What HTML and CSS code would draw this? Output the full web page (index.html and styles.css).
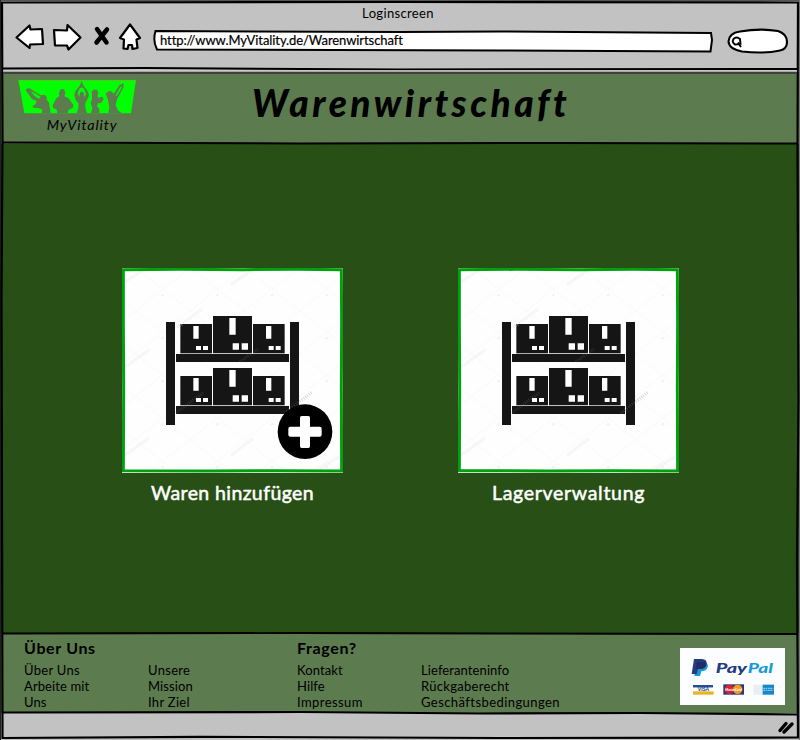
FILE: index.html
```html
<!DOCTYPE html>
<html lang="de">
<head>
<meta charset="utf-8">
<title>Loginscreen</title>
<link rel="stylesheet" href="styles.css">
</head>
<body>
<div class="window">
  <header class="chrome">
    <div class="window-title"><span class="t-title">Loginscreen</span></div>
    <div class="toolbar">
      <svg class="nav" width="138" height="34" viewBox="12 20 138 34">
        <g fill="#fff" stroke="#000" stroke-width="2.2" stroke-linejoin="round">
          <path d="M16.5 37.500L29.500 25.500L30.500 29.500L42 29L43 44L30 44.500L29.500 48Z"/>
          <path d="M54 30L67 30.500L67.500 25L80.500 37.500L68.500 49.500L67 45.500L55 45.500L54.500 38Z"/>
          <path d="M130 24.500L140 38L136.500 39.500L137.500 48L132.500 49L132 45L128.500 45L127.500 49L123.500 48.500L124 39.500L120 38Z"/>
        </g>
        <g stroke="#000" stroke-width="4.500" stroke-linecap="round"><path d="M97 29L106.500 42.500M107 29.500L96.500 42.500"/></g>
      </svg>
      <div class="address">
        <svg class="address-shape" width="560" height="24" viewBox="153 29 560 24"><path d="M155.500 31L400 32L500 31.500L711 33L712 40L710.500 51.500L500 50.500L157 49.500Q152.500 41 155.500 31Z" fill="#fff" stroke="#000" stroke-width="2"/></svg>
        <span class="t-url">http://www.MyVitality.de/Warenwirtschaft</span>
      </div>
      <svg class="search" width="62" height="28" viewBox="726 27 62 28">
        <path d="M740 31.500Q760 28 778 31Q787 34 787 42Q787 49 780 50.500Q764 54 742 51.500Q729 49 728.500 41.500Q729 33 740 31.500Z" fill="#fff" stroke="#000" stroke-width="2.100"/>
        <path d="M733.500 39Q736.500 36 740 39L740.500 44L735 44.500Q731.500 42 733.500 39ZM738 42.500L741 47" fill="none" stroke="#000" stroke-width="1.900"/>
      </svg>
    </div>
  </header>

  <section class="banner">
    <svg class="logo" width="125" height="65" viewBox="0 0 375 195">
      <path d="M10 18H363L348 118H28Z" fill="#0f0"/>
      <path d="M12 19H363" stroke="#8ba52f" stroke-width="2"/>
      <g fill="#5c7b4e">
        <path d="M33 45L43 43L77 64L88 62L96 70L94 76L102 86L107 118H80L82 107L70 102L54 101L53 95L61 92L65 81L51 75L34 52Z"/>
        <path d="M133 67L132 56L137 46H147L151 56L148 67L161 73L175 93L174 101L160 108L158 118H126V108L114 101L113 94L124 73Z"/>
        <path d="M200 20L205 34L219 53L222 65L216 78L211 87V101L216 118H185L190 101V88L182 78L178 64L181 52L195 34Z"/>
        <path d="M231 63L230 54L236 47H246L250 56L247 67L255 75L253 70L262 68L266 75L258 87L249 88L246 96L253 105V118H228L232 103L227 88L231 76Z"/>
        <path d="M272 58L283 51L291 53L296 60L313 34L325 27L326 39L306 76L302 94L310 110L321 118H280L283 99L279 78Z"/>
      </g>
      <path d="M188 58L194 43Q201 37 207 44L213 60L208 70L206 57Q200 48 195 57L193 69ZM47 51L65 61L77 68L72 74L59 67ZM301 66L314 42L321 34L319 43L307 64Z" fill="#0f0"/>
      <text class="logo-text" x="95" y="168" textLength="210" lengthAdjust="spacing">MyVitality</text>
    </svg>
    <h1><span class="t-h1">Warenwirtschaft</span></h1>
  </section>

  <main>
    <a class="card">
      <svg class="picture" width="221" height="205" viewBox="36 39 663 615">
        <defs>
          <pattern id="grid" x="76" y="38" width="164" height="129" patternUnits="userSpaceOnUse"><path d="M0 0L164 129M0 129L164 0" stroke="#f1f1f1" stroke-width="2" stroke-dasharray="9 4"/><path d="M78 80h8v5h-8z" fill="#ececec"/></pattern>
          <g id="box"><path d="M0 0H95V88H0Z" fill="#151515"/><path d="M39 6H55V44H39ZM47 66H62V78H47ZM68 66H83V78H68Z" fill="#fff"/></g>
          <g id="bigbox"><path d="M0 0H117V112H0Z" fill="#151515"/><path d="M49 6H68V56H49ZM59 82H78V101H59ZM86 82H105V101H86Z" fill="#fff"/></g>
          <g id="shelf">
            <path d="M36 39H699V654H36Z" fill="#fefefe"/>
            <path d="M36 39H699V654H36Z" fill="url(#grid)"/>
            <path d="M168 201H195V510H168ZM540 201H567V510H540ZM198 297H537V321H198ZM198 453H537V477H198Z" fill="#151515"/>
            <use href="#box" x="211" y="207"/><use href="#bigbox" x="309" y="183"/><use href="#box" x="429" y="207"/>
            <use href="#box" x="211" y="363"/><use href="#bigbox" x="309" y="339"/><use href="#box" x="429" y="363"/>
            <path d="M198 474L282 411M390 320L443 282M525 474L606 411" stroke="#777" stroke-width="9" stroke-dasharray="3 4" opacity=".3"/>
            <path d="M48 78L104 42M364 88L430 42M48 334L118 284M202 217L276 162M364 600L430 550M46 600L116 550M630 640L690 603" stroke="#ddd" stroke-width="9" stroke-dasharray="3 4" opacity=".5"/>
            <path d="M40 44L210 43L400 44L560 43L694 44L695 200L694 400L695 648L500 647L300 648L40 647L41 400L40 200Z" fill="none" stroke="#00a010" stroke-width="9"/>
          </g>
        </defs>
        <use href="#shelf"/>
        <circle cx="585" cy="530" r="82" fill="#000"/>
        <path d="M575 483H595Q600 483 600 488V515H629Q635 515 635 521V539Q635 545 629 545H600V573Q600 579 595 579H575Q570 579 570 573V545H541Q535 545 535 539V521Q535 515 541 515H570V488Q570 483 575 483Z" fill="#fff"/>
      </svg>
      <span class="label"><span class="t-add">Waren hinzufügen</span></span>
    </a>
    <a class="card">
      <svg class="picture" width="221" height="205" viewBox="36 39 663 615"><use href="#shelf"/></svg>
      <span class="label"><span class="t-stock">Lagerverwaltung</span></span>
    </a>
  </main>

  <footer>
    <section class="group">
      <h2>Über Uns</h2>
      <div class="links">
        <ul><li class="wide">Über Uns</li><li>Arbeite mit</li><li>Uns</li></ul>
        <ul><li class="wide">Unsere</li><li>Mission</li><li class="wide">Ihr Ziel</li></ul>
      </div>
    </section>
    <section class="group">
      <h2>Fragen?</h2>
      <div class="links">
        <ul><li>Kontakt</li><li>Hilfe</li><li class="wider">Impressum</li></ul>
        <ul><li>Lieferanteninfo</li><li class="wide">Rückgaberecht</li><li class="wider">Geschäftsbedingungen</li></ul>
      </div>
    </section>
    <svg class="paypal" width="105" height="57" viewBox="240 69 315 171">
      <path d="M240 69H555V240H240Z" fill="#fcfdff"/>
      <path d="M290 111H315Q326 116 323 127Q319 139 304 139L300 153H283Z" fill="#169bd7"/>
      <path d="M282 102H306Q321 103 320 116Q317 132 300 132H294L290 147H275Z" fill="#253b80"/>
      <path d="M290 111H314Q321 113 319 119Q315 132 299 132H287Z" fill="#222d65"/>
      <text class="pp pp-a" x="347" y="144" textLength="94" lengthAdjust="spacingAndGlyphs">Pay</text>
      <text class="pp pp-b" x="443" y="144" textLength="76" lengthAdjust="spacingAndGlyphs">Pal</text>
      <path d="M279 180H339V188H279Z" fill="#294b92"/><path d="M279 188H339V199H279Z" fill="#fff"/><path d="M279 199H341V209H279Z" fill="#e8b51e"/>
      <text class="visa" x="293" y="199" textLength="34" lengthAdjust="spacingAndGlyphs">VISA</text>
      <path d="M370 178H432V209H370Z" fill="#28377c"/><circle cx="388" cy="193" r="14" fill="#d7232e"/><circle cx="413" cy="193" r="14" fill="#f49b20"/>
      <text class="mc" x="376" y="198" textLength="49" lengthAdjust="spacingAndGlyphs">MasterCard</text>
      <path d="M460 179H522V209H460Z" fill="#e9eef0"/><path d="M488 179H522V209H488Z" fill="#1687c9"/><path d="M490 190H520M490 196H520" stroke="#a9daf2" stroke-width="3" stroke-dasharray="5 2"/>
    </svg>
  </footer>

  <div class="status">
    <svg width="18" height="16" viewBox="777 719 18 16"><path d="M780 730.500L786 723.500M784 732L792 724" stroke="#000" stroke-width="3.400" stroke-linecap="round"/></svg>
  </div>

  <svg class="outline" width="800" height="740" viewBox="0 0 800 740" fill="none" stroke="#000">
    <path d="M0 .5H800" stroke="#555"/>
    <path d="M.5 0V740" stroke="#222"/>
    <path d="M799.500 0V740" stroke="#777"/>
    <path d="M2 2.500L400 2L798 2.500L797.500 150L798.500 400L797 560L798 737.500L500 738L200 736.800L2.500 738L2 500L1.500 300L2.500 140Z" stroke-width="2.200"/>
    <path d="M3 68.500L145 68L400 69.500L797 69" stroke-width="2"/>
    <path d="M3 71H797" stroke="#ccc" stroke-width="1.500"/>
    <path d="M3 72.800H797" stroke="#404040" stroke-width="2.200"/>
    <path d="M3 142.500L300 143.500L560 143L797 143.500" stroke-width="2"/>
    <path d="M3 633.500L300 633L500 633.500L797 634" stroke-width="1.900"/>
    <path d="M3 712.500L300 712L480 713.500L640 713L797 714.500" stroke-width="2.200"/>
  </svg>
</div>
</body>
</html>
```
FILE: styles.css
```css
* { box-sizing: border-box; }
body { margin: 0; font-family: Lato, "Noto Sans", sans-serif; color: #000; }
svg { display: block; }
.window { position: relative; width: 800px; height: 740px; display: flex; flex-direction: column; overflow: hidden; background: #284f15; }
.outline { position: absolute; inset: 0; pointer-events: none; }

.chrome { height: 72px; background: #c2c2c2; }
.window-title { height: 20px; padding: 5px 4px 0 0; text-align: center; font-size: 13px; line-height: 17px; letter-spacing: 0.35px; }
.toolbar { display: flex; align-items: flex-start; padding-left: 12px; }
.address { display: grid; width: 560px; margin: 9px 13px 0 3px; }
.address > * { grid-area: 1 / 1; }
.t-url { font-size: 13px; line-height: 23px; padding-left: 7px; white-space: nowrap; letter-spacing: -0.08px; -webkit-text-stroke: 0.2px #000; }
.search { margin-top: 7px; }

.banner { height: 72px; background: #5c7b4e; display: flex; padding: 2px 0 0 15px; }
.logo-text { font: italic 400 43px Lato, sans-serif; }
h1 { margin: 0; padding: 8px 0 0 112px; font-size: 37px; line-height: 42px; font-weight: 900; font-style: italic; white-space: nowrap; }
.t-h1 { letter-spacing: 3.5px; }

main { height: 489px; display: flex; gap: 115px; padding: 124px 0 0 122px; }
.card { width: 221px; color: #fff; }
.label { display: block; text-align: center; font-size: 19.500px; line-height: 26px; padding-top: 7px; white-space: nowrap; -webkit-text-stroke: 0.5px #fff; }
.t-add { letter-spacing: 0.4px; }
.t-stock { letter-spacing: 0.7px; }

footer { height: 80px; background: #5c7b4e; display: flex; padding-left: 24px; }
.group { width: 273px; }
.group + .group { width: 383px; }
h2 { margin: 0; padding-top: 5px; font-size: 16px; line-height: 20px; font-weight: 700; letter-spacing: 0.65px; }
.links { display: grid; grid-template-columns: 124px 1fr; padding-top: 4px; }
ul { list-style: none; margin: 0; padding: 0; font-size: 13px; line-height: 16px; white-space: nowrap; letter-spacing: 0.1px; }
.wide { letter-spacing: 0.3px; }
.wider { letter-spacing: 0.43px; }
.paypal { margin-top: 15px; }
.pp { font: italic 900 38px Lato, sans-serif; }
.pp-a { fill: #253b80; }
.pp-b { fill: #169bd7; }
.visa { font: italic 900 14px Lato, sans-serif; fill: #294b92; }
.mc { font: italic 900 12px Lato, sans-serif; fill: #fff; }

.status { height: 27px; background: #c2c2c2; display: flex; justify-content: flex-end; padding: 6px 5px 0 0; }
```
